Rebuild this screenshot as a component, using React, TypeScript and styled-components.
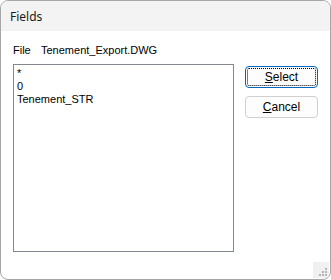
import React from 'react';
import styled, { createGlobalStyle } from 'styled-components';

const GlobalStyle = createGlobalStyle`
	html, body {
		margin: 0;
		padding: 0;
		background: #ffffff;
	}
`

const Window = styled.div`
	box-sizing: border-box;
	width: 331px;
	height: 280px;
	border: 1px solid #a6a6a6;
	border-radius: 8px;
	background: #ffffff;
	overflow: hidden;
	display: flex;
	flex-direction: column;
	position: relative;
	font-family: "Segoe UI", "Noto Sans", sans-serif;
`

const TitleBar = styled.div`
	height: 30px;
	flex: none;
	background: #f3f3f3;
	display: flex;
	align-items: center;
	padding-left: 9px;
	font-size: 12px;
	color: #1a1a1a;
`

const Body = styled.div`
	flex: 1;
	display: flex;
	padding: 12px 12px 27px 12px;
	gap: 11px;
	font-family: Tahoma, "Liberation Sans", sans-serif;
	font-size: 11px;
	color: #000000;
`

const LeftColumn = styled.div`
	display: flex;
	flex-direction: column;
	width: 222px;
`

const FileRow = styled.div`
	display: flex;
	height: 14px;
	line-height: 14px;
	margin-bottom: 7px;
`

const FileLabel = styled.span`
	width: 28px;
`

const ListBox = styled.div`
	flex: 1;
	border: 1px solid #828790;
	padding: 2px 3px;
	display: flex;
	flex-direction: column;
`

const ListItem = styled.div`
	height: 13px;
	line-height: 13px;
`

const ButtonColumn = styled.div`
	display: flex;
	flex-direction: column;
	gap: 8px;
	padding-top: 23px;
`

const Button = styled.button<{ $focused?: boolean }>`
	box-sizing: border-box;
	width: 73px;
	height: 22px;
	background: #fdfdfd;
	border: 1px solid ${p => p.$focused ? '#0067c0' : '#d0d0d0'};
	border-radius: 4px;
	font-family: Tahoma, "Liberation Sans", sans-serif;
	font-size: 12px;
	color: #000000;
	padding: 0;
	outline: ${p => p.$focused ? '1px dotted #000000' : 'none'};
	outline-offset: -3px;
	u {
		text-decoration: underline;
	}
`

const Grip = styled.svg`
	position: absolute;
	right: 1px;
	bottom: 1px;
`

export default function App() {
	return (
		<>
			<GlobalStyle />
			<Window>
				<TitleBar>Fields</TitleBar>
				<Body>
					<LeftColumn>
						<FileRow>
							<FileLabel>File</FileLabel>
							<span>Tenement_Export.DWG</span>
						</FileRow>
						<ListBox>
							<ListItem>*</ListItem>
							<ListItem>0</ListItem>
							<ListItem>Tenement_STR</ListItem>
						</ListBox>
					</LeftColumn>
					<ButtonColumn>
						<Button $focused><u>S</u>elect</Button>
						<Button><u>C</u>ancel</Button>
					</ButtonColumn>
				</Body>
				<Grip width="16" height="16" viewBox="0 0 16 16">
					<rect width="16" height="16" fill="#f0f0f0" />
					<rect x="12" y="6" width="2" height="2" fill="#b4b4b4" />
					<rect x="9" y="9" width="2" height="2" fill="#b4b4b4" />
					<rect x="12" y="9" width="2" height="2" fill="#b4b4b4" />
					<rect x="6" y="12" width="2" height="2" fill="#b4b4b4" />
					<rect x="9" y="12" width="2" height="2" fill="#b4b4b4" />
					<rect x="12" y="12" width="2" height="2" fill="#b4b4b4" />
				</Grip>
			</Window>
		</>
	);
}
